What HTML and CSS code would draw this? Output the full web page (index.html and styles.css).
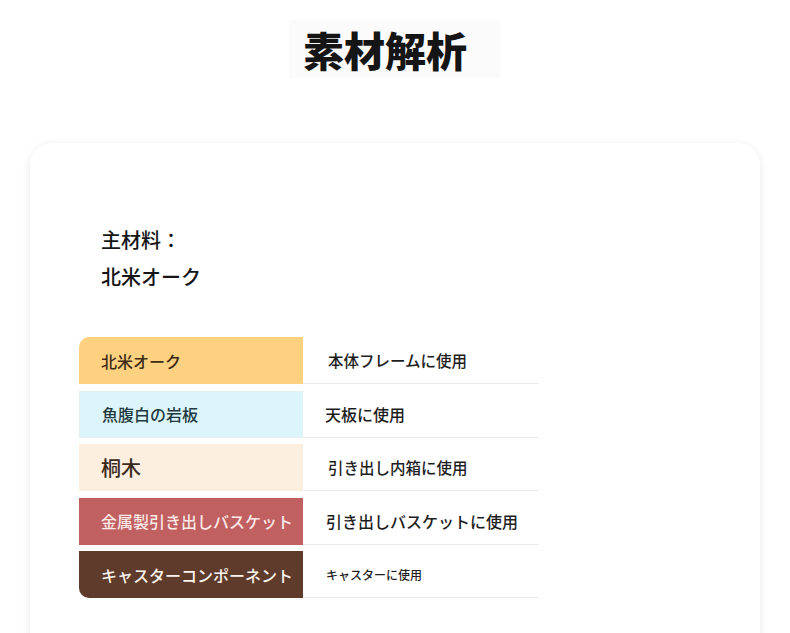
FILE: index.html
```html
<!DOCTYPE html>
<html lang="ja">
<head>
<meta charset="utf-8">
<link rel="stylesheet" href="styles.css">
</head>
<body>
<div class="page">
  <header class="head">
    <h1 class="title">素材解析</h1>
  </header>
  <section class="card">
    <div class="main">
      <p class="main-label">主材料：</p>
      <p class="main-value">北米オーク</p>
    </div>
    <div class="table">
      <div class="row">
        <div class="name oak">北米オーク</div>
        <div class="use">本体フレームに使用</div>
      </div>
      <div class="row">
        <div class="name stone">魚腹白の岩板</div>
        <div class="use use-tight">天板に使用</div>
      </div>
      <div class="row">
        <div class="name paulownia">桐木</div>
        <div class="use">引き出し内箱に使用</div>
      </div>
      <div class="row">
        <div class="name metal">金属製引き出しバスケット</div>
        <div class="use use-mid">引き出しバスケットに使用</div>
      </div>
      <div class="row">
        <div class="name caster">キャスターコンポーネント</div>
        <div class="use use-mid use-small">キャスターに使用</div>
      </div>
    </div>
  </section>
</div>
</body>
</html>
```
FILE: styles.css
```css
* { box-sizing: border-box; }
html, body { margin: 0; padding: 0; background: #fff; }
body {
  font-family: "Noto Sans CJK JP", "Noto Sans", sans-serif;
  color: #1a1a1a;
  overflow: hidden;
}
.page { padding-top: 20px; }
.head { display: flex; justify-content: center; }
.title {
  margin: 0;
  padding: 0 34px 0 14px;
  background: #fbfbfb;
  font-size: 41px;
  font-weight: 900;
  line-height: 58px;
  color: #151515;
}
.card {
  margin: 65px 30px 0;
  background: #fff;
  border-radius: 22px;
  box-shadow: 0 2px 10px rgba(0,0,0,0.09);
  padding: 78px 49px 60px;
  min-height: 600px;
}
.main { padding-left: 22px; margin-bottom: 42px; }
.main p { margin: 0; font-size: 20px; line-height: 37px; color: #151515; font-weight: 500; }
.table { width: 460px; display: flex; flex-direction: column; gap: 6.5px; }
.row { display: flex; height: 47px; }
.name {
  width: 224px;
  display: flex;
  align-items: center;
  padding-left: 22px;
  font-size: 16px;
  font-weight: 500;
}
.use {
  flex: 1;
  display: flex;
  align-items: center;
  padding-left: 25px;
  font-size: 15.5px;
  font-weight: 500;
  border-bottom: 1px solid #ececec;
  color: #1e1e1e;
}
.use-tight { padding-left: 22px; font-size: 16px; }
.use-mid { padding-left: 23px; font-size: 16px; }
.use-small { font-size: 12px; }
.oak { background: #fdd180; color: #3b2a14; border-top-left-radius: 10px; }
.stone { background: #dbf5fa; color: #1f3a40; border: 1px solid #e6eef0; border-right: none; }
.paulownia { background: #fcefe0; color: #3a2a1c; font-size: 20px; }
.metal { background: #c06061; color: #fbe9e7; }
.caster { background: #5e3b2b; color: #fbf3ee; border-bottom-left-radius: 10px; }
```
